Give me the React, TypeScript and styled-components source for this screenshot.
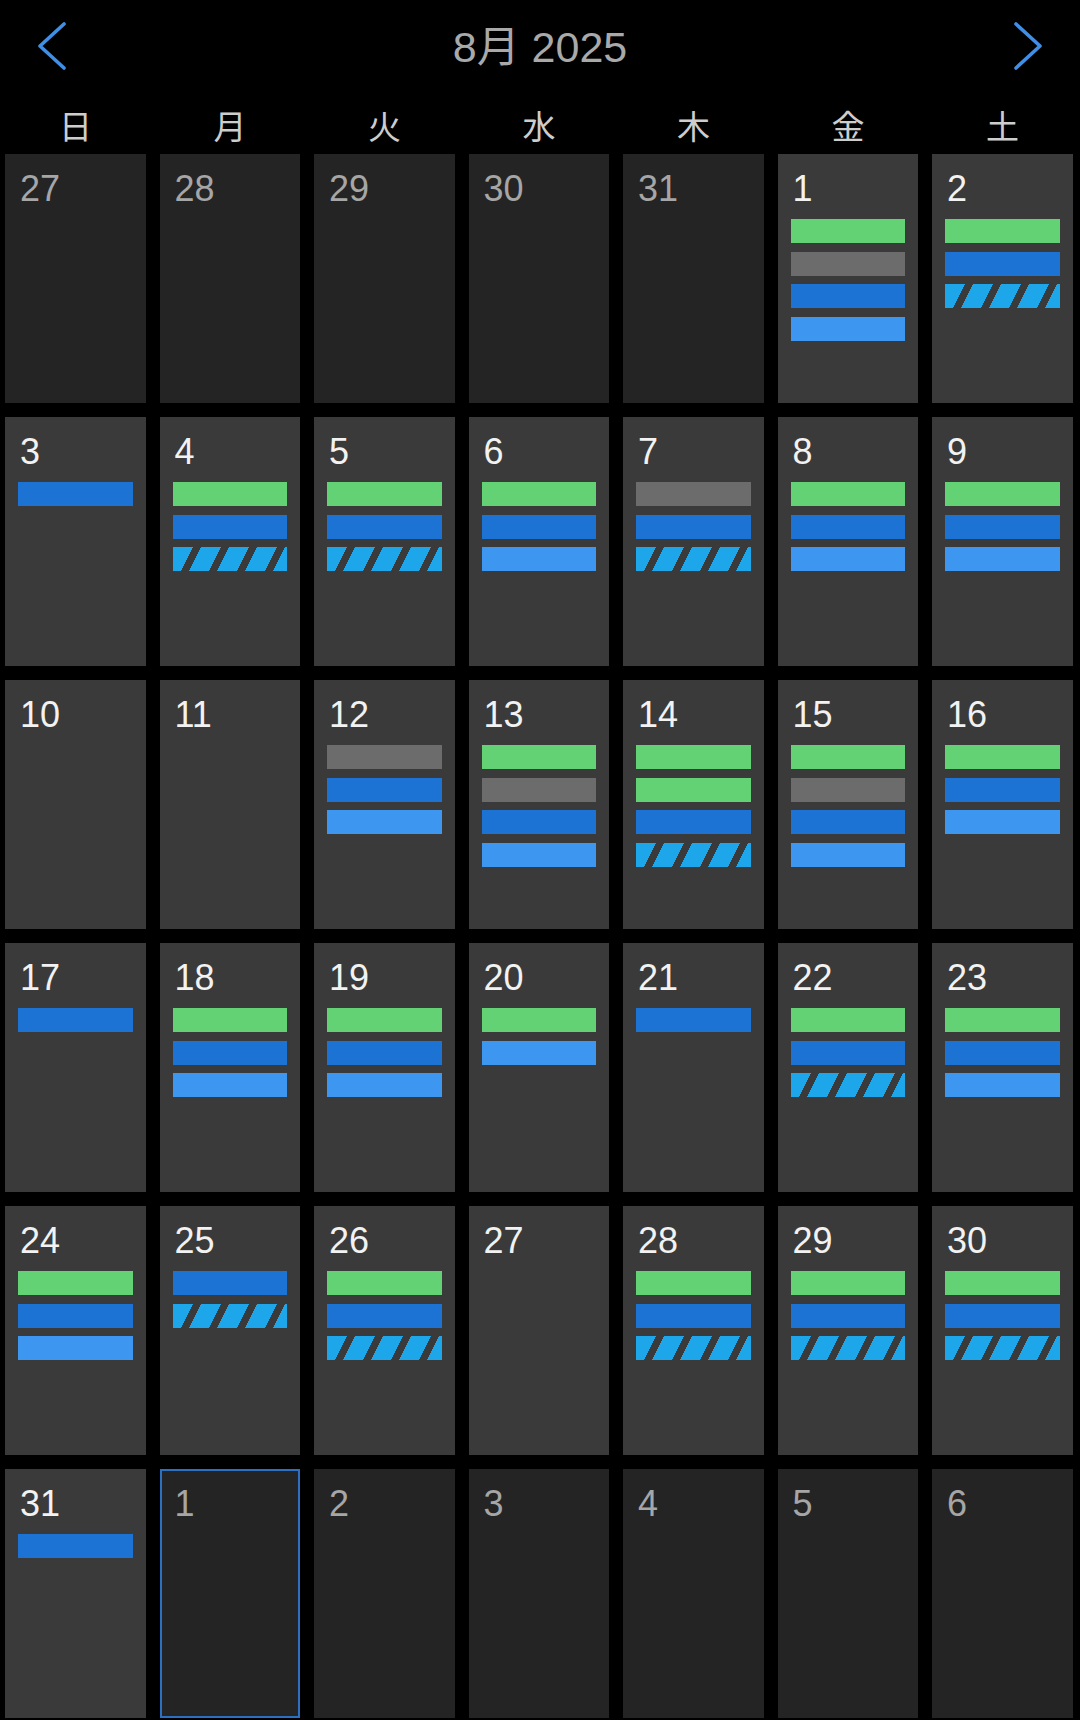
import React from "react";
import styled, { createGlobalStyle, css } from "styled-components";

const Global = createGlobalStyle`
  html, body { margin: 0; padding: 0; background: #000; }
  body { font-family: "Liberation Sans", "Noto Sans CJK JP", sans-serif; }
`;

type Kind = "G" | "S" | "B" | "L" | "H";

const COLORS: Record<Kind, string> = {
  G: "#62d275",
  S: "#6c6c6c",
  B: "#1d73d3",
  L: "#3d96f0",
  H: "#1ea6ea",
};

const Page = styled.div`
  width: 1080px;
  height: 1720px;
  background: #000;
  overflow: hidden;
`;

const Header = styled.div`
  height: 92px;
  display: flex;
  align-items: center;
  justify-content: space-between;
  padding: 0 36px 0 36px;
  box-sizing: border-box;
`;

const Title = styled.div`
  font-size: 43px;
  color: #a9a9a9;
  font-family: "Liberation Sans", "Noto Sans CJK JP", sans-serif;
  letter-spacing: 0;
  margin-top: -6px;
`;

const NavButton = styled.button`
  background: none;
  border: none;
  padding: 0;
  width: 32px;
  height: 48px;
  display: flex;
  align-items: center;
  justify-content: center;
  cursor: pointer;
`;

const Grid = styled.div`
  display: grid;
  grid-template-columns: repeat(7, 1fr);
  column-gap: 13.6px;
  padding: 0 7px 0 5px;
`;

const WeekRow = styled(Grid)`
  height: 62px;
  box-sizing: border-box;
  padding-top: 4px;
  align-items: center;
`;

const WeekLabel = styled.div`
  text-align: center;
  font-size: 33px;
  color: #cdcdcd;
  font-family: "Liberation Sans", "Noto Sans CJK JP", sans-serif;
`;

const Days = styled(Grid)`
  row-gap: 14px;
`;

const Cell = styled.div<{ $inMonth: boolean; $selected?: boolean }>`
  height: 249px;
  box-sizing: border-box;
  background: ${(p) => (p.$inMonth ? "#3a3a3a" : "#242424")};
  padding: 17px 13px 0 13px;
  display: flex;
  flex-direction: column;
  ${(p) =>
    p.$selected &&
    css`
      border: 2px solid #2c70c4;
      padding: 15px 11px 0 11px;
    `}
`;

const DayNum = styled.div<{ $inMonth: boolean }>`
  font-size: 36px;
  line-height: 36px;
  height: 36px;
  color: ${(p) => (p.$inMonth ? "#f2f2f2" : "#a6a6a6")};
  padding-left: 2px;
`;

const Bars = styled.div`
  margin-top: 12px;
  display: flex;
  flex-direction: column;
  gap: 8.5px;
`;

const Bar = styled.div<{ $kind: Kind }>`
  height: 24px;
  background: ${(p) =>
    p.$kind === "H"
      ? `repeating-linear-gradient(116.6deg, #1ea6ea 0px, #1ea6ea 17.8px, #3a3a3a 17.8px, #3a3a3a 25px)`
      : COLORS[p.$kind]};
`;

type Day = { n: number; inMonth: boolean; bars: Kind[]; selected?: boolean };

const parse = (s: string): Kind[] => (s ? (s.split("") as Kind[]) : []);

const augBars: Record<number, string> = {
  1: "GSBL",
  2: "GBH",
  3: "B",
  4: "GBH",
  5: "GBH",
  6: "GBL",
  7: "SBH",
  8: "GBL",
  9: "GBL",
  10: "",
  11: "",
  12: "SBL",
  13: "GSBL",
  14: "GGBH",
  15: "GSBL",
  16: "GBL",
  17: "B",
  18: "GBL",
  19: "GBL",
  20: "GL",
  21: "B",
  22: "GBH",
  23: "GBL",
  24: "GBL",
  25: "BH",
  26: "GBH",
  27: "",
  28: "GBH",
  29: "GBH",
  30: "GBH",
  31: "B",
};

const days: Day[] = [
  ...[27, 28, 29, 30, 31].map((n) => ({ n, inMonth: false, bars: [] as Kind[] })),
  ...Array.from({ length: 31 }, (_, i) => ({
    n: i + 1,
    inMonth: true,
    bars: parse(augBars[i + 1]),
  })),
  { n: 1, inMonth: false, bars: [], selected: true },
  ...[2, 3, 4, 5, 6].map((n) => ({ n, inMonth: false, bars: [] as Kind[] })),
];

const weekdays = ["日", "月", "火", "水", "木", "金", "土"];

const Chevron = ({ dir }: { dir: "left" | "right" }) => (
  <svg width="32" height="48" viewBox="0 0 32 48" fill="none">
    <path
      d={dir === "left" ? "M28 2 L4 24 L28 46" : "M4 2 L28 24 L4 46"}
      stroke="#3f8fe6"
      strokeWidth="3.6"
      strokeLinecap="round"
      strokeLinejoin="round"
    />
  </svg>
);

export default function App() {
  return (
    <Page>
      <Global />
      <Header>
        <NavButton aria-label="前の月">
          <Chevron dir="left" />
        </NavButton>
        <Title>8月 2025</Title>
        <NavButton aria-label="次の月">
          <Chevron dir="right" />
        </NavButton>
      </Header>
      <WeekRow>
        {weekdays.map((w) => (
          <WeekLabel key={w}>{w}</WeekLabel>
        ))}
      </WeekRow>
      <Days>
        {days.map((d, i) => (
          <Cell key={i} $inMonth={d.inMonth} $selected={d.selected}>
            <DayNum $inMonth={d.inMonth}>{d.n}</DayNum>
            {d.bars.length > 0 && (
              <Bars>
                {d.bars.map((b, j) => (
                  <Bar key={j} $kind={b} />
                ))}
              </Bars>
            )}
          </Cell>
        ))}
      </Days>
    </Page>
  );
}
